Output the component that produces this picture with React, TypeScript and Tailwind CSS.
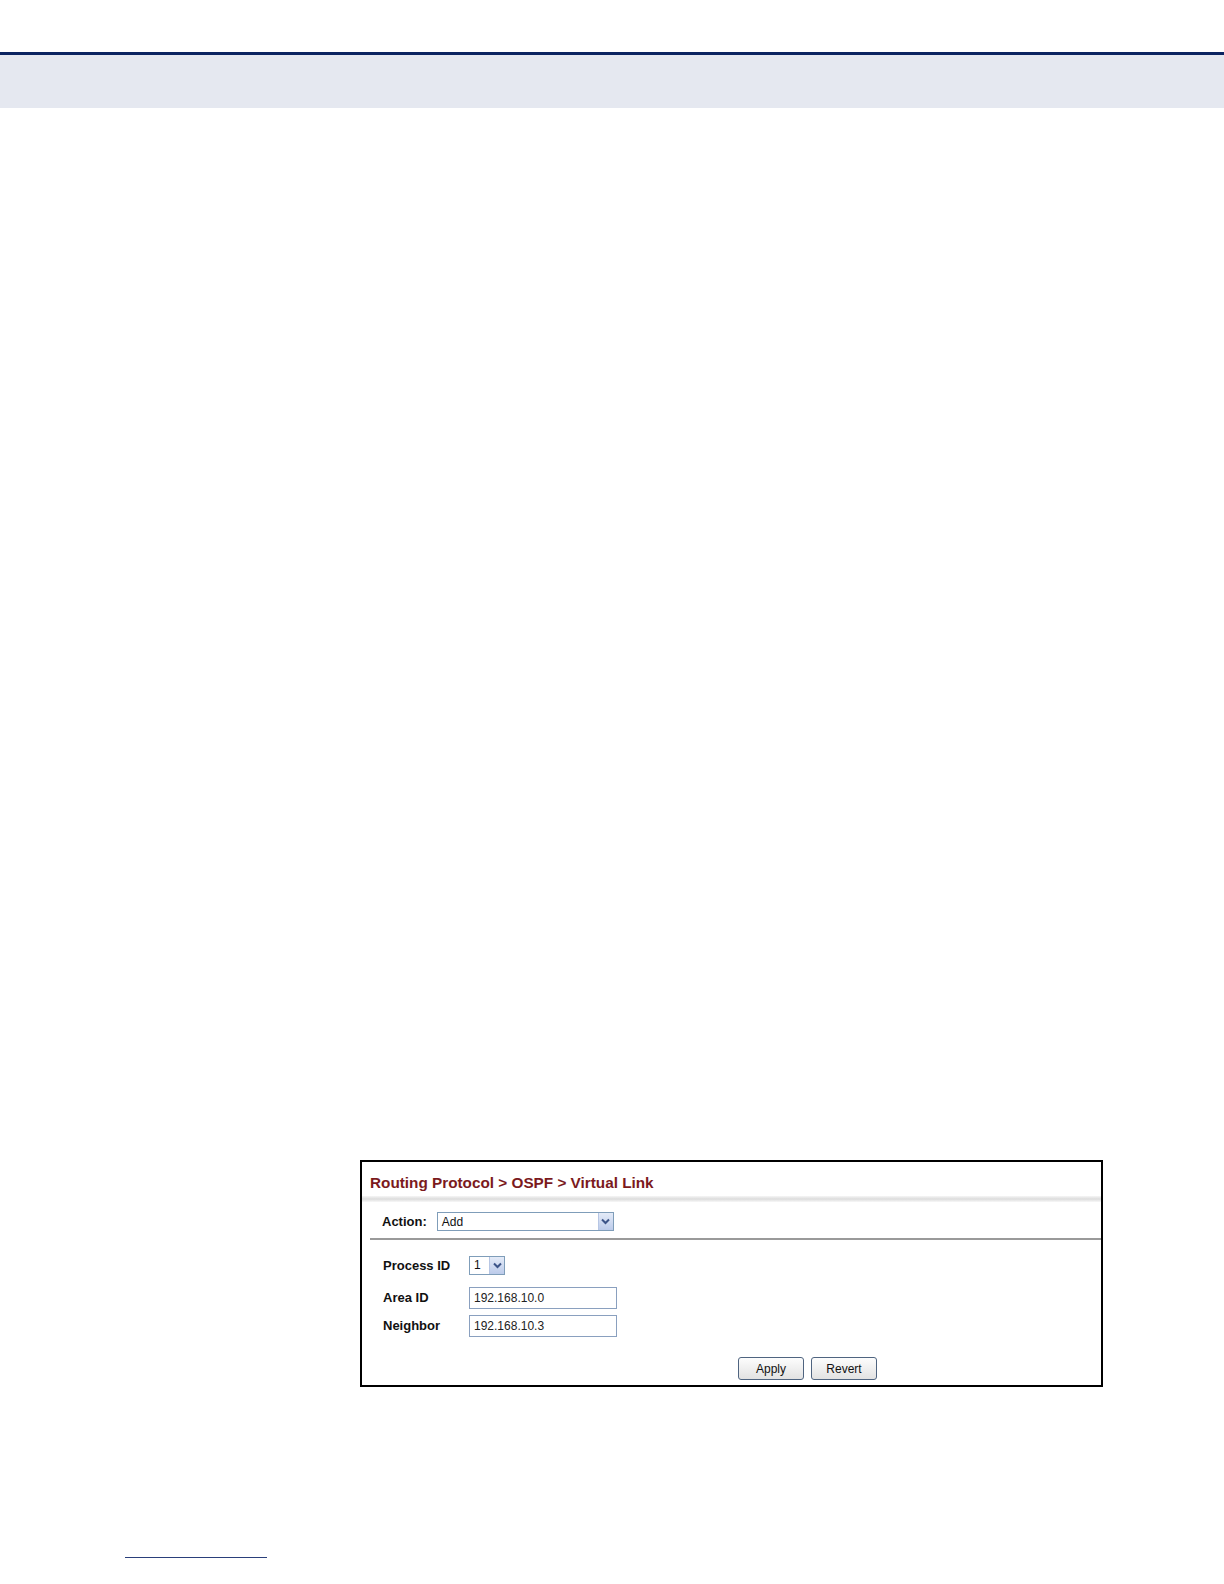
function Arrow() {
  return (
    <span className="flex h-full w-[15px] items-center justify-center border-l border-[#b7c6e4] bg-gradient-to-b from-[#e4ebf8] to-[#bccbea]">
      <svg width="9" height="7" viewBox="0 0 9 7">
        <path d="M1 1.5 L4.5 5 L8 1.5" fill="none" stroke="#3c5488" strokeWidth="2" />
      </svg>
    </span>
  );
}

function Field({ value }: { value: string }) {
  return (
    <div className="flex h-[22px] w-[148px] items-center border border-[#8aa0bf] bg-white px-[4px] text-[12px] text-[#222]">
      {value}
    </div>
  );
}

function Button({ label }: { label: string }) {
  return (
    <div className="flex h-[23px] w-[66px] items-center justify-center rounded-[3px] border border-[#4f6480] bg-gradient-to-b from-[#fdfdfd] to-[#e2e2e2] text-[12px] text-[#111]">
      {label}
    </div>
  );
}

export default function App() {
  return (
    <div className="relative h-[1584px] w-[1224px] bg-white font-['Liberation_Sans',Arial,sans-serif]">
      <div className="pt-[52px]">
        <div className="h-[3px] bg-[#0b2461]" />
        <div className="h-[53px] bg-[#e5e8f0]" />
      </div>

      <div className="ml-[360px] mt-[1052px] h-[227px] w-[743px] border-2 border-black bg-white">
        <div className="px-[8px] pt-[12px] text-[15.3px] font-bold leading-[18px] text-[#7b1a1d]">
          Routing Protocol &gt; OSPF &gt; Virtual Link
        </div>
        <div className="mt-[4px] h-[6px] bg-gradient-to-b from-[#f6f6f6] via-[#dcdcdc] to-[#f8f8f8]" />
        <div className="flex items-center gap-[10px] px-[20px] pt-[10px]">
          <span className="text-[13px] font-bold text-[#111]">Action:</span>
          <div className="flex h-[19px] w-[177px] items-center justify-between border border-[#7f9db9] bg-white pl-[4px] text-[12px] text-[#111]">
            <span>Add</span>
            <Arrow />
          </div>
        </div>
        <div className="ml-[8px] mt-[6px] h-[2px] bg-[#9a9a9a]" />
        <div className="px-[21px] pt-[16px]">
          <div className="flex items-center">
            <span className="w-[86px] text-[13px] font-bold text-[#111]">Process ID</span>
            <div className="flex h-[19px] w-[36px] items-center justify-between border border-[#7f9db9] bg-white pl-[4px] text-[12px] text-[#111]">
              <span>1</span>
              <Arrow />
            </div>
          </div>
          <div className="mt-[12px] flex items-center">
            <span className="w-[86px] text-[13px] font-bold text-[#111]">Area ID</span>
            <Field value="192.168.10.0" />
          </div>
          <div className="mt-[6px] flex items-center">
            <span className="w-[86px] text-[13px] font-bold text-[#111]">Neighbor</span>
            <Field value="192.168.10.3" />
          </div>
        </div>
        <div className="ml-[376px] mt-[20px] flex gap-[7px]">
          <Button label="Apply" />
          <Button label="Revert" />
        </div>
      </div>

      <div className="ml-[125px] mt-[170px] h-[1px] w-[142px] bg-[#2a3f7a]" />
    </div>
  );
}
